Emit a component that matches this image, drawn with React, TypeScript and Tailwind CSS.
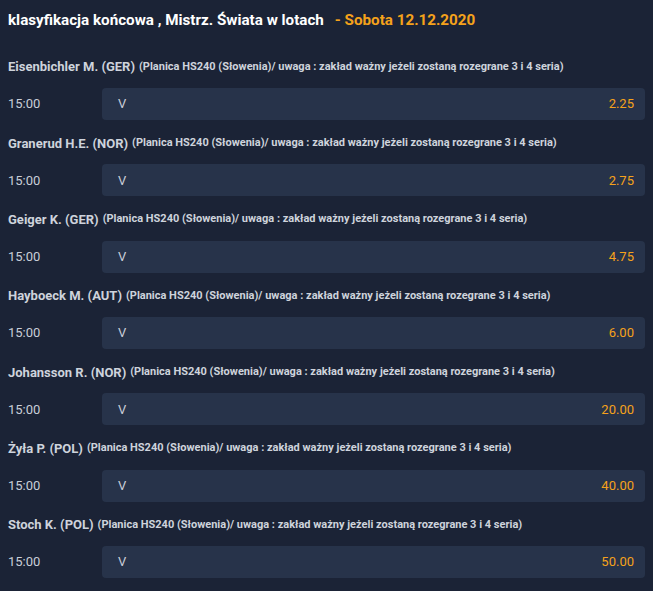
import React from "react";

const rows = [
  { name: "Eisenbichler M. (GER)", odds: "2.25" },
  { name: "Granerud H.E. (NOR)", odds: "2.75" },
  { name: "Geiger K. (GER)", odds: "4.75" },
  { name: "Hayboeck M. (AUT)", odds: "6.00" },
  { name: "Johansson R. (NOR)", odds: "20.00" },
  { name: "Żyła P. (POL)", odds: "40.00" },
  { name: "Stoch K. (POL)", odds: "50.00" },
];

const note = "(Planica HS240 (Słowenia)/ uwaga : zakład ważny jeżeli zostaną rozegrane 3 i 4 seria)";

export default function App() {
  return (
    <div className="min-h-[591px] w-full bg-[#1b2336] px-2 font-['Roboto',sans-serif]">
      <div className="flex h-[40px] items-center text-[15.2px] font-bold">
        <span className="text-white">klasyfikacja końcowa , Mistrz. Świata w lotach</span>
        <span className="ml-[11px] text-[#f5a21b]">- Sobota 12.12.2020</span>
      </div>
      <div className="mt-[12px] flex flex-col">
        {rows.map((row, i) => (
          <div key={i} className="mb-[8.33px] flex flex-col">
            <div className="flex h-[30px] items-center whitespace-nowrap font-bold text-[#ced3dc]">
              <span className="text-[13px]">{row.name}</span>
              <span className="ml-[4px] text-[11px]">{note}</span>
            </div>
            <div className="mt-[6px] flex h-[32px] items-center">
              <span className="w-[94px] text-[13px] text-[#c9ced8]">15:00</span>
              <div className="flex h-full flex-1 items-center justify-between rounded-[4px] bg-[#27334a] pl-4 pr-[11px] text-[13px]">
                <span className="text-[#c9ced8]">V</span>
                <span className="text-[#f5a21b]">{row.odds}</span>
              </div>
            </div>
          </div>
        ))}
      </div>
    </div>
  );
}
